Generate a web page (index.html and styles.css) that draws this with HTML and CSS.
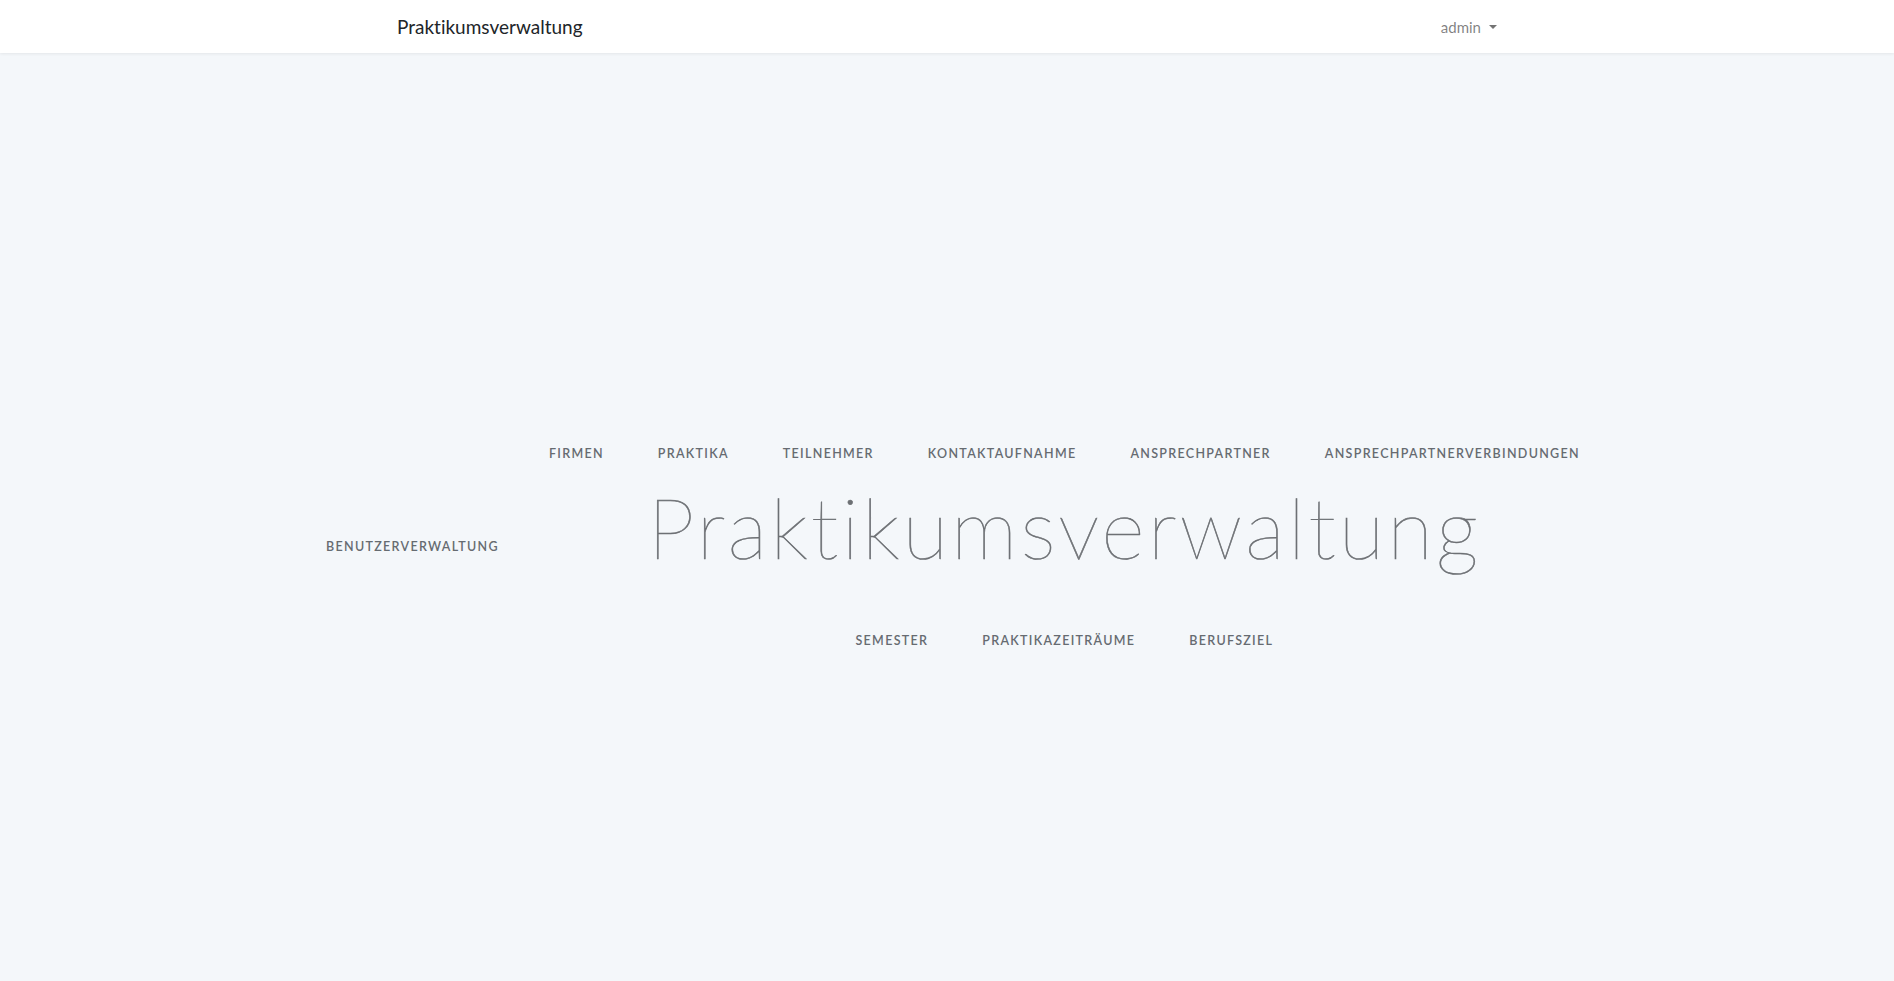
FILE: index.html
```html
<!DOCTYPE html>
<html lang="de">
<head>
<meta charset="utf-8">
<title>Praktikumsverwaltung</title>
<link rel="stylesheet" href="styles.css">
</head>
<body>
<header class="navbar">
  <div class="navbar-inner">
    <a class="brand" href="#">Praktikumsverwaltung</a>
    <a class="user" href="#">admin <span class="caret"></span></a>
  </div>
</header>
<main class="hero">
  <div class="menu">
    <a class="menu-link side-link" href="#">Benutzerverwaltung</a>
    <div class="center-col">
      <nav class="menu-row">
        <a class="menu-link" href="#">Firmen</a>
        <a class="menu-link" href="#">Praktika</a>
        <a class="menu-link" href="#">Teilnehmer</a>
        <a class="menu-link" href="#">Kontaktaufnahme</a>
        <a class="menu-link" href="#">Ansprechpartner</a>
        <a class="menu-link" href="#">Ansprechpartnerverbindungen</a>
      </nav>
      <h1 class="title">Praktikumsverwaltung</h1>
      <nav class="menu-row bottom-row">
        <a class="menu-link" href="#">Semester</a>
        <a class="menu-link" href="#">Praktikazeiträume</a>
        <a class="menu-link" href="#">Berufsziel</a>
      </nav>
    </div>
  </div>
</main>
</body>
</html>
```
FILE: styles.css
```css
* { box-sizing: border-box; }
html, body { margin: 0; padding: 0; }
body {
  background: #f4f7fa;
  font-family: "Lato", "Noto Sans", sans-serif;
  color: #212529;
  min-height: 981px;
  font-variant-ligatures: none;
}
a { text-decoration: none; }

.navbar {
  background: #ffffff;
  height: 53px;
  box-shadow: 0 1px 3px rgba(0, 0, 0, 0.07);
  position: relative;
  z-index: 1;
}
.navbar-inner {
  max-width: 1140px;
  height: 100%;
  margin: 0 auto;
  padding: 0 20px;
  display: flex;
  align-items: center;
  justify-content: space-between;
}
.brand {
  font-size: 19px;
  color: #212529;
  font-weight: 400;
}
.user {
  font-size: 15px;
  color: rgba(0, 0, 0, 0.5);
  display: flex;
  align-items: center;
  gap: 8px;
}
.caret {
  width: 0;
  height: 0;
  border-top: 4px solid rgba(0, 0, 0, 0.55);
  border-left: 4px solid transparent;
  border-right: 4px solid transparent;
}

.hero {
  min-height: 928px;
  padding-top: 60px;
  padding-left: 12px;
  display: flex;
  align-items: center;
  justify-content: center;
}
.menu {
  display: flex;
  align-items: center;
}
.center-col {
  display: flex;
  flex-direction: column;
  align-items: center;
}
.menu-row {
  display: flex;
}
.menu-link {
  display: block;
  padding: 0 27px;
  font-size: 12.5px;
  line-height: 20px;
  font-weight: 600;
  letter-spacing: 1.3px;
  text-transform: uppercase;
  color: #666b71;
}
.side-link {
  margin-right: -4px;
}
.title {
  margin: 21px 0 0;
  font-size: 84px;
  line-height: 1;
  font-weight: 200;
  letter-spacing: 3px;
  color: #6d7074;
  -webkit-text-stroke: 0.6px #6d7074;
}
.bottom-row {
  margin-top: 62px;
}
```
